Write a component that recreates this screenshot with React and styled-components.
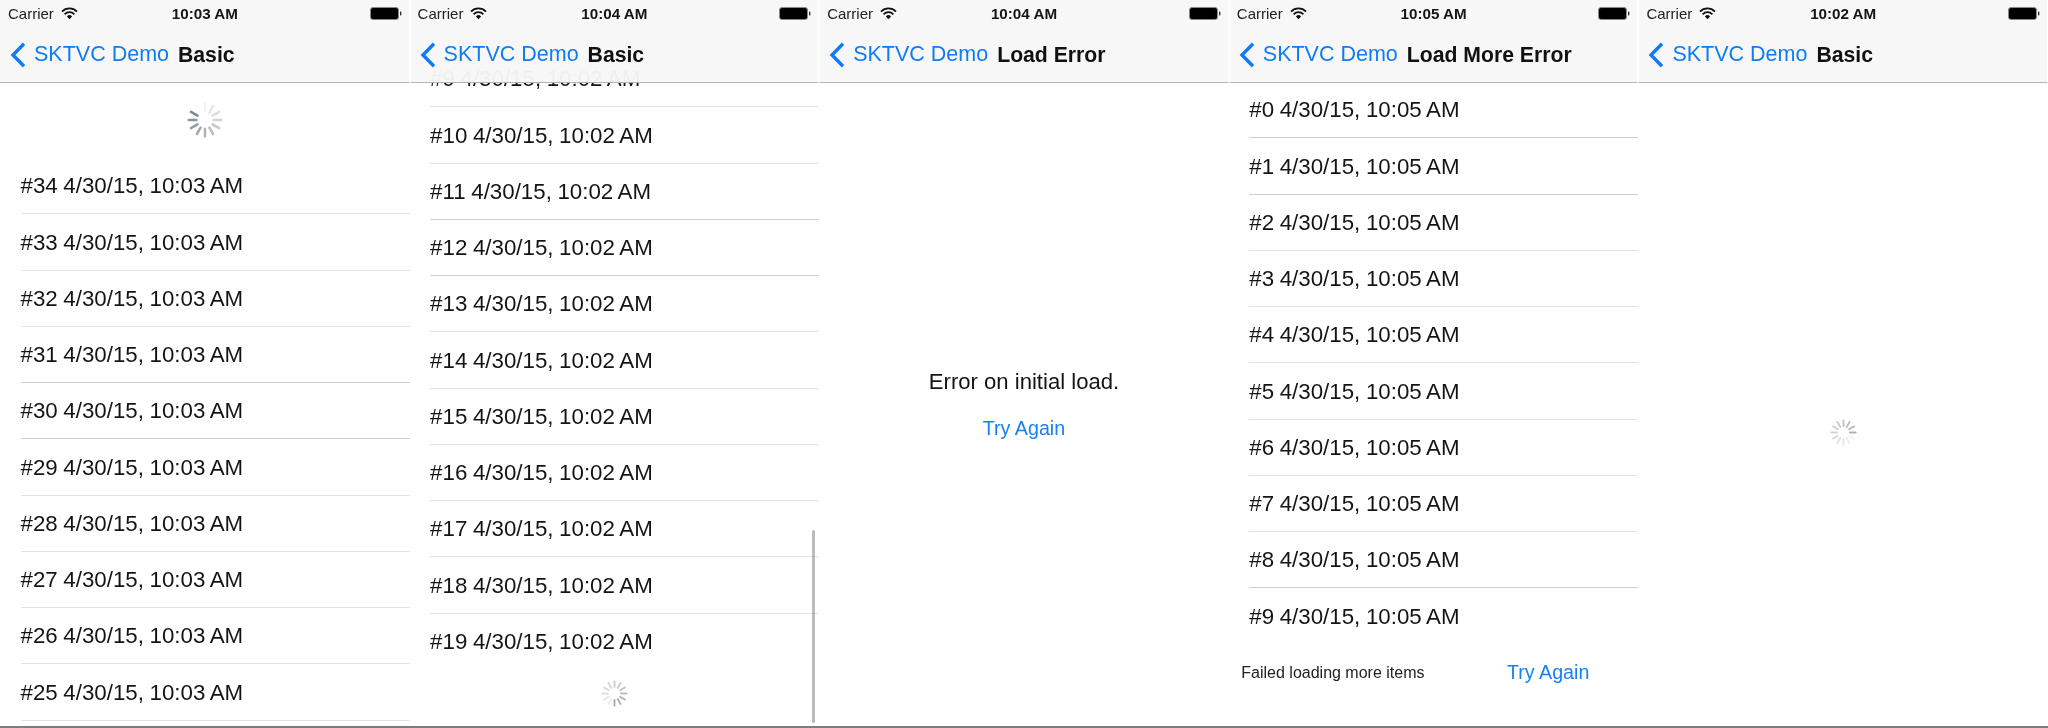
import React from "react";
import styled, { createGlobalStyle } from "styled-components";

const Global = createGlobalStyle`
  html, body { margin: 0; padding: 0; background: #fff; }
  #root { width: 2048px; height: 728px; overflow: hidden; }
`;

const Strip = styled.div`
  display: grid;
  grid-template-columns: repeat(5, 1fr);
  width: 2048px;
  height: 728px;
  box-sizing: border-box;
  border-bottom: 2px solid #7d7d7d;
  font-family: "Liberation Sans", Arial, sans-serif;
  color: #111;
  filter: blur(0.35px);
`;

const Phone = styled.section`
  position: relative;
  overflow: hidden;
  min-width: 0;
  background: #fff;
`;

const Header = styled.header`
  position: absolute;
  inset: 0 0 auto 0;
  z-index: 2;
  height: 83px;
  box-sizing: border-box;
  display: flex;
  flex-direction: column;
  background: rgba(247, 247, 247, 0.965);
  border-bottom: 1px solid #b4b4b4;
  border-left: ${p => (p.$first ? "0" : "1px solid #fdfdfd")};
  border-right: 1px solid #fdfdfd;
`;

const StatusBar = styled.div`
  display: grid;
  grid-template-columns: 1fr auto 1fr;
  align-items: center;
  height: 27px;
  padding: 0 7px 0 ${p => (p.$first ? 8 : 7)}px;
`;

const StatusLeft = styled.div`
  display: flex;
  align-items: center;
  gap: 7px;
  font-size: 15px;
  color: #222;
`;

const Clock = styled.div`
  font-size: 15.2px;
  font-weight: 700;
  color: #151515;
`;

const StatusRight = styled.div`
  display: flex;
  justify-content: flex-end;
`;

const NavBar = styled.div`
  display: flex;
  align-items: center;
  height: 54px;
  padding-top: 1px;
  box-sizing: border-box;
  padding-left: ${p => (p.$first ? 10 : 9)}px;
`;

const BackLabel = styled.span`
  margin-left: 8px;
  font-size: 21.5px;
  color: #0f7cf6;
`;

const Title = styled.span`
  margin-left: 9px;
  font-size: 21.2px;
  font-weight: 700;
  color: #111;
`;

const Scroller = styled.div`
  display: flex;
  flex-direction: column;
  padding-top: ${p => p.$top}px;
`;

const Refresh = styled.div`
  height: 76px;
  display: flex;
  align-items: center;
  justify-content: center;
  padding-bottom: 1px;
  box-sizing: border-box;
`;

const Row = styled.div`
  height: 56.25px;
  flex: none;
  box-sizing: border-box;
  margin-left: 20.5px;
  padding-top: 1.5px;
  display: flex;
  align-items: center;
  font-size: 22.3px;
  word-spacing: -0.6px;
  color: #141414;
  border-bottom: ${p => (p.$last ? "0" : `1px solid ${p.$strong ? "#cfcfcf" : "#e3e3e3"}`)};
`;

const LoadMore = styled.div`
  height: 48px;
  display: flex;
  align-items: center;
  justify-content: center;
`;

const FailedFooter = styled.div`
  height: 56px;
  display: grid;
  grid-template-columns: 1fr auto;
  align-items: center;
  padding: 0 49px 0 12.5px;
`;

const FailedText = styled.span`
  font-size: 16px;
  color: #222;
`;

const RetryLink = styled.span`
  font-size: 19.7px;
  color: #1680f4;
`;

const Centered = styled.div`
  height: 728px;
  display: flex;
  flex-direction: column;
  align-items: center;
  padding-top: ${p => p.$top}px;
  box-sizing: border-box;
`;

const ErrorText = styled.div`
  font-size: 22.1px;
  color: #141414;
`;

const RetryCentered = styled(RetryLink)`
  margin-top: 22px;
`;

const ScrollThumb = styled.div`
  position: absolute;
  right: 4px;
  top: 530px;
  width: 3px;
  height: 193px;
  border-radius: 2px;
  background: rgba(120, 120, 120, 0.5);
`;

const Wifi = () => (
  <svg width="17" height="13" viewBox="0 0 17 13" aria-hidden="true">
    <g fill="none" stroke="#111" strokeWidth="1.7" strokeLinecap="butt">
      <path d="M1 4.6 A10.4 10.4 0 0 1 16 4.6" />
      <path d="M3.6 7.3 A6.8 6.8 0 0 1 13.4 7.3" />
    </g>
    <path d="M5.9 9.4 A3.6 3.6 0 0 1 11.1 9.4 L8.5 12.2 Z" fill="#111" />
  </svg>
);

const Battery = () => (
  <svg width="32" height="13" viewBox="0 0 32 13" aria-hidden="true">
    <rect x="0.5" y="0.5" width="28" height="12" rx="2.5" fill="#000" stroke="#888" />
    <path d="M30 4.5h.4a1 1 0 0 1 1 1v2a1 1 0 0 1-1 1H30Z" fill="#333" />
  </svg>
);

const BackChevron = () => (
  <svg width="16" height="26" viewBox="0 0 16 26" aria-hidden="true">
    <path d="M14 1.8 3 13l11 11.2" fill="none" stroke="#0f7cf6" strokeWidth="3.4" />
  </svg>
);

const Spinner = ({ size, lead, base = 0.12, span = 0.62, color = "#5f6873" }) => {
  const ticks = Array.from({ length: 12 }, (_, i) => i);
  const r = size / 2;
  return (
    <svg width={size} height={size} viewBox={`0 0 ${size} ${size}`} aria-hidden="true">
      {ticks.map(i => {
        const age = (lead - i + 12) % 12;
        const opacity = base + (span * (11 - age)) / 11;
        return (
          <line
            key={i}
            x1={r}
            y1={size * 0.05}
            x2={r}
            y2={size * 0.26}
            stroke={color}
            strokeWidth={size * 0.07}
            strokeLinecap="round"
            opacity={opacity}
            transform={`rotate(${i * 30} ${r} ${r})`}
          />
        );
      })}
    </svg>
  );
};

const range = (from, to) => {
  const out = [];
  const step = from < to ? 1 : -1;
  for (let n = from; n !== to + step; n += step) out.push(n);
  return out;
};

const Screen = ({ first, time, title, children }) => (
  <Phone>
    <Header $first={first}>
      <StatusBar $first={first}>
        <StatusLeft>
          Carrier
          <Wifi />
        </StatusLeft>
        <Clock>{time}</Clock>
        <StatusRight>
          <Battery />
        </StatusRight>
      </StatusBar>
      <NavBar $first={first}>
        <BackChevron />
        <BackLabel>SKTVC Demo</BackLabel>
        <Title>{title}</Title>
      </NavBar>
    </Header>
    {children}
  </Phone>
);

const Rows = ({ items, stamp, strong = [], lastPlain }) =>
  items.map((n, i) => (
    <Row key={n} $strong={strong.includes(n)} $last={lastPlain && i === items.length - 1}>
      #{n} 4/30/15, {stamp}
    </Row>
  ));

export default function App() {
  return (
    <>
      <Global />
      <Strip>
        <Screen first time="10:03 AM" title="Basic">
          <Scroller $top={82}>
            <Refresh>
              <Spinner size={36} lead={10} base={0.01} span={0.78} />
            </Refresh>
            <Rows items={range(34, 25)} stamp="10:03 AM" strong={[31, 30]} />
          </Scroller>
        </Screen>

        <Screen time="10:04 AM" title="Basic">
          <Scroller $top={51}>
            <Rows items={range(9, 19)} stamp="10:02 AM" strong={[11, 12]} lastPlain />
            <LoadMore>
              <Spinner size={27} lead={6} base={0.12} span={0.5} color="#777" />
            </LoadMore>
          </Scroller>
          <ScrollThumb />
        </Screen>

        <Screen time="10:04 AM" title="Load Error">
          <Centered $top={369}>
            <ErrorText>Error on initial load.</ErrorText>
            <RetryCentered>Try Again</RetryCentered>
          </Centered>
        </Screen>

        <Screen time="10:05 AM" title="Load More Error">
          <Scroller $top={82}>
            <Rows items={range(0, 9)} stamp="10:05 AM" strong={[0, 1, 8]} lastPlain />
            <FailedFooter>
              <FailedText>Failed loading more items</FailedText>
              <RetryLink>Try Again</RetryLink>
            </FailedFooter>
          </Scroller>
        </Screen>

        <Screen time="10:02 AM" title="Basic">
          <Centered $top={419}>
            <Spinner size={27} lead={3} base={0.08} span={0.5} color="#777" />
          </Centered>
        </Screen>
      </Strip>
    </>
  );
}
